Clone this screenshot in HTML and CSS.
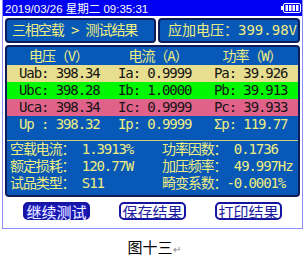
FILE: index.html
```html
<!DOCTYPE html>
<html lang="zh">
<head>
    <meta charset="UTF-8">
    <meta name="viewport" content="width=device-width, initial-scale=1.0">
    <title>测试结果</title>
    <link rel="stylesheet" href="styles.css">
</head>
<body>
  <div class="screen">
    <div class="topbar">
      <span>2019/03/26 星期二 09:35:31</span>
      <svg class="battery" width="20" height="10" viewBox="0 0 20 10">
        <rect x="0" y="3" width="2" height="4" fill="#fff"/>
        <rect x="2.5" y="0.5" width="17" height="9" rx="1.5" fill="#0000f4" stroke="#fff"/>
        <rect x="4.5" y="2" width="2.5" height="6" fill="#fff"/>
        <rect x="8" y="2" width="2.5" height="6" fill="#fff"/>
        <rect x="11.5" y="2" width="2.5" height="6" fill="#fff"/>
        <rect x="15" y="2" width="2.5" height="6" fill="#fff"/>
      </svg>
    </div>
    <div class="content">
      <div class="title_row">
        <div class="panel crumb">三相空载 &gt; 测试结果</div>
        <div class="panel voltage">应加电压：399.98V</div>
      </div>
      <div class="panel table">
        <div class="head">
          <span>电压（V）</span><span>电流（A）</span><span>功率（W）</span>
        </div>
        <div class="row row_ab"><span>Uab: 398.34</span><span>Ia: 0.9999</span><span>Pa: 39.926</span></div>
        <div class="row row_bc"><span>Ubc: 398.28</span><span>Ib: 1.0000</span><span>Pb: 39.913</span></div>
        <div class="row row_ca"><span>Uca: 398.34</span><span>Ic: 0.9999</span><span>Pc: 39.933</span></div>
        <div class="row row_p"><span>Up : 398.32</span><span>Ip: 0.9999</span><span>Σp: 119.77</span></div>
        <div class="info">
          <span>空载电流： 1.3913%</span><span>功率因数： 0.1736</span>
          <span>额定损耗： 120.77W</span><span>加压频率： 49.997Hz</span>
          <span>试品类型： S11</span><span>畸变系数：-0.0001%</span>
        </div>
      </div>
      <div class="buttons">
        <div class="btn active">继续测试</div>
        <div class="btn">保存结果</div>
        <div class="btn">打印结果</div>
      </div>
    </div>
  </div>
  <p class="caption">图十三<span class="mark">↵</span></p>
</body>
</html>
```

FILE: styles.css
```css
*{
  margin:0;
  padding:0;
  box-sizing: border-box;
}
body{
  background: #fff;
  font-family: "DejaVu Sans Mono", "Noto Sans CJK SC", monospace;
}
.screen{
  width: 301px;
  height: 229px;
  margin-left: 2px;
  border: 1px solid #8c8cf4;
  border-top: 0;
}
.topbar{
  height: 16px;
  background: #0000f4;
  color: #fff;
  display: flex;
  align-items: center;
  justify-content: space-between;
  padding: 0 1px 0 2px;
  font: 11.5px "Liberation Sans", "Noto Sans CJK SC", sans-serif;
  white-space: nowrap;
}
.battery{
  display: block;
}
.content{
  padding: 2px 2px 0 2px;
}
.title_row{
  display: flex;
  gap: 2px;
  height: 25px;
}
.panel{
  background: #0858b8;
  border: 2px solid #0c1c58;
  border-radius: 4px;
  color: #eeee80;
  font-size: 14px;
  letter-spacing: -1.1px;
  white-space: nowrap;
}
.crumb{
  flex: 1;
  padding-left: 5px;
  line-height: 21px;
}
.voltage{
  width: 142px;
  letter-spacing: 0;
  text-align: right;
  padding-right: 1px;
  line-height: 21px;
}
.table{
  margin-top: 2px;
  height: 152px;
  overflow: hidden;
}
.head{
  height: 18px;
  line-height: 18px;
  display: grid;
  grid-template-columns: 103px 96px 1fr;
  text-align: center;
}
.row{
  height: 17px;
  line-height: 17px;
  display: grid;
  grid-template-columns: 99px 96px 1fr;
  padding-left: 12px;
  color: #141414;
}
.row_ab{
  background: #e8de90;
}
.row_bc{
  background: #00f800;
}
.row_ca{
  background: #e0628a;
}
.row_p{
  color: #eeee80;
}
.info{
  margin-top: 7px;
  border-top: 1px solid #c8d07c;
  display: grid;
  grid-template-columns: 152px 1fr;
  padding-left: 3px;
  line-height: 17px;
}
.buttons{
  display: flex;
  gap: 29px;
  padding-left: 18px;
  margin-top: 5px;
}
.btn{
  width: 67px;
  height: 18px;
  border: 2px solid #1414a0;
  border-radius: 5px;
  background: #fff;
  color: #1c1ca0;
  font: 15px "Noto Sans CJK SC", sans-serif;
  display: flex;
  align-items: center;
  justify-content: center;
}
.btn.active{
  background: #1818b0;
  color: #eef;
  text-shadow: 0 0 1px #4040ff;
}
.caption{
  margin-top: 10px;
  text-align: center;
  font: 15px "Noto Sans CJK SC", sans-serif;
  line-height: 16px;
  color: #000;
}
.mark{
  font-size: 10px;
  color: #888;
}
```
